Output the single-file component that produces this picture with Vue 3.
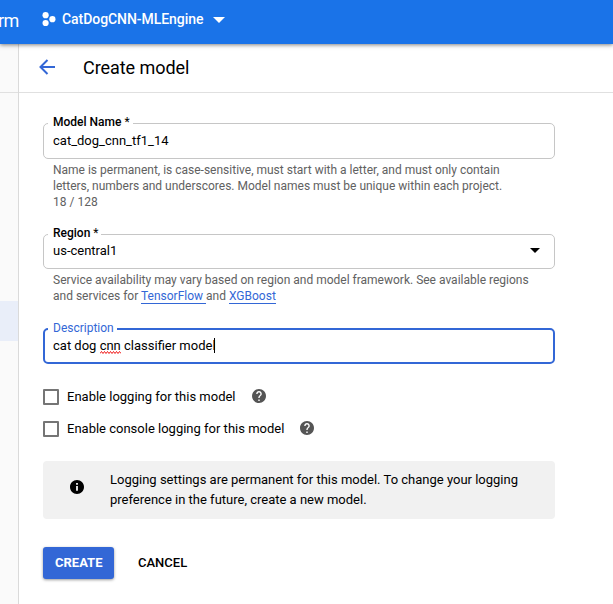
<template>
  <div class="page">
    <header class="topbar">
      <span class="brand">rm</span>
      <svg class="project-icon" width="14" height="15" viewBox="0 0 14 15">
        <circle cx="3.6" cy="3.2" r="3.1" />
        <circle cx="3.6" cy="11" r="3.1" />
        <circle cx="10.4" cy="7.2" r="3.1" />
      </svg>
      <span class="project-name">CatDogCNN-MLEngine</span>
      <svg class="project-arrow" width="12" height="6" viewBox="0 0 12 6"><path d="M0 0h12L6 6z" /></svg>
    </header>
    <div class="body">
      <aside class="sidebar">
        <div class="sidebar-head"></div>
        <div class="sidebar-active"></div>
      </aside>
      <main class="main">
        <div class="title-bar">
          <svg class="back" width="16" height="16" viewBox="0 0 16 16">
            <path d="M16 8H1.500M8.500 1L1.500 8l7 7" />
          </svg>
          <h1>Create model</h1>
        </div>
        <form class="form" @submit.prevent>
          <div class="field name-field">
            <label class="field-label">Model Name <span class="star">*</span></label>
            <div class="field-box">{{ name }}</div>
            <div class="hint">
              Name is permanent, is case-sensitive, must start with a letter, and must only contain<br />
              letters, numbers and underscores. Model names must be unique within each project.<br />
              {{ name.length }} / 128
            </div>
          </div>
          <div class="field region-field">
            <label class="field-label">Region <span class="star">*</span></label>
            <div class="field-box">
              <span>{{ region }}</span>
              <svg width="10" height="5" viewBox="0 0 10 5"><path d="M0 0h10L5 5z" /></svg>
            </div>
            <div class="hint">
              Service availability may vary based on region and model framework. See available regions<br />
              and services for <a>TensorFlow&nbsp;</a>and <a>XGBoost</a>
            </div>
          </div>
          <div class="field focused">
            <label class="field-label">Description</label>
            <div class="field-box">
              <span>cat dog <span class="misspelled">cnn<svg width="21" height="3" viewBox="0 0 21 3"><path d="M0 2.500l1.500-2 1.500 2 1.500-2 1.500 2 1.500-2 1.500 2 1.500-2 1.500 2 1.500-2 1.500 2 1.500-2 1.500 2 1.500-2 1.500 2" /></svg></span> classifier model</span>
              <i class="caret"></i>
            </div>
          </div>
          <div class="checks">
            <div v-for="item in options" :key="item" class="check">
              <span class="checkbox"></span>
              <span class="check-text">{{ item }}</span>
              <svg class="help" width="14" height="14" viewBox="2 2 20 20">
                <path d="M12 2C6.480 2 2 6.480 2 12s4.480 10 10 10 10-4.480 10-10S17.520 2 12 2zm1 17h-2v-2h2v2zm2.070-7.750l-.9.920C13.450 12.900 13 13.500 13 15h-2v-.5c0-1.100.450-2.100 1.170-2.830l1.240-1.260c.370-.360.590-.860.590-1.410 0-1.100-.9-2-2-2s-2 .9-2 2H8c0-2.210 1.790-4 4-4s4 1.790 4 4c0 .880-.360 1.680-.930 2.250z" />
              </svg>
            </div>
          </div>
          <div class="notice">
            <svg width="14" height="14" viewBox="2 2 20 20">
              <path d="M12 2C6.480 2 2 6.480 2 12s4.480 10 10 10 10-4.480 10-10S17.520 2 12 2zm1.300 15.500h-2.600v-7h2.600v7zm0-8.600h-2.600V6.300h2.600v2.600z" />
            </svg>
            <p>
              Logging settings are permanent for this model. To change your logging<br />
              preference in the future, create a new model.
            </p>
          </div>
          <div class="actions">
            <button class="create">CREATE</button>
            <button class="cancel" type="button">CANCEL</button>
          </div>
        </form>
      </main>
    </div>
  </div>
</template>

<script setup>
import { ref } from 'vue'

const name = ref('cat_dog_cnn_tf1_14')
const region = ref('us-central1')
const options = ['Enable logging for this model', 'Enable console logging for this model']
</script>

<style>
body {
  margin: 0;
  overflow: hidden;
}
</style>

<style scoped>
.page {
  height: 604px;
  display: flex;
  flex-direction: column;
  background: #fff;
  color: #000;
  font-family: Roboto, 'Liberation Sans', sans-serif;
  font-size: 13px;
  white-space: nowrap;
}
.topbar {
  position: relative;
  height: 44px;
  box-sizing: border-box;
  padding-bottom: 5px;
  display: flex;
  align-items: center;
  background: #1a73e8;
  color: #fff;
  box-shadow: 0 1px 4px rgba(0, 0, 0, 0.5);
}
.topbar svg {
  fill: #fff;
}
.brand {
  width: 42px;
  margin-top: 2px;
  margin-left: -2px;
  font-size: 18px;
  letter-spacing: -0.6px;
}
.project-icon {
  margin-left: 2px;
}
.project-name {
  margin-left: 6px;
  margin-bottom: 1px;
  width: 151px;
  font-size: 14px;
  font-weight: 500;
  letter-spacing: -0.06px;
}
.body {
  flex: 1;
  display: flex;
}
.sidebar {
  width: 18px;
  background: #fafafa;
  border-right: 1px solid #dadada;
}
.sidebar-head {
  height: 48px;
  border-bottom: 1px solid #e0e0e0;
}
.sidebar-active {
  height: 40px;
  margin-top: 208px;
  background: #e9eef9;
}
.main {
  flex: 1;
}
.title-bar {
  height: 48px;
  padding-left: 20px;
  display: flex;
  align-items: center;
  border-bottom: 1px solid #e0e0e0;
}
.back {
  margin-bottom: 2px;
  fill: none;
  stroke: #3367d6;
  stroke-width: 2;
}
h1 {
  margin: 0 0 2px 28px;
  font-size: 18px;
  font-weight: 400;
  letter-spacing: -0.05px;
}
.form {
  width: 512px;
  padding: 30px 0 0 24px;
}
.field {
  position: relative;
}
.name-field {
  height: 111px;
}
.region-field {
  height: 94px;
}
.field-box {
  height: 36px;
  box-sizing: border-box;
  padding: 0 14px 2px 9px;
  display: flex;
  align-items: center;
  border: 1px solid #c6c6c6;
  border-radius: 5px;
}
.region-field .field-box {
  height: 35px;
  justify-content: space-between;
}
.field-label {
  position: absolute;
  left: 5px;
  top: -9px;
  padding: 0 3px 0 5px;
  background: #fff;
  font-size: 12px;
  line-height: 16px;
  font-weight: 500;
}
.star {
  font-weight: 400;
}
.focused .field-box {
  border: 2px solid #3367d6;
  padding: 0 8px 1px;
}
.focused .field-label {
  top: -8px;
  color: #3367d6;
  font-weight: 400;
}
.misspelled {
  position: relative;
}
.misspelled svg {
  position: absolute;
  left: 0;
  bottom: -1px;
  fill: none;
  stroke: #e00;
  stroke-width: 0.9;
}
.caret {
  width: 1px;
  height: 15px;
  margin-left: -2px;
  background: #000;
}
.hint {
  padding: 3px 0 0 10px;
  color: #616161;
  font-size: 12px;
  line-height: 16px;
}
.hint a {
  color: #3367d6;
  border-bottom: 1px solid #3367d6;
}
.checks {
  padding-top: 17px;
}
.check {
  height: 32px;
  display: flex;
  align-items: center;
}
.checkbox {
  width: 16px;
  height: 16px;
  box-sizing: border-box;
  border: 2px solid #757575;
  border-radius: 1px;
}
.check-text {
  margin: 0 0 2px 8px;
}
.help {
  margin: 0 0 2px 16px;
  fill: #555;
}
.notice {
  height: 58px;
  margin-top: 16px;
  padding-left: 27px;
  display: flex;
  align-items: center;
  box-sizing: border-box;
  background: #f1f1f1;
  border-radius: 4px;
}
.notice svg {
  margin-bottom: 6px;
}
.notice p {
  margin: 0 0 0 26px;
  line-height: 20px;
}
.actions {
  margin-top: 28px;
  display: flex;
}
button {
  height: 32px;
  padding: 0 12px 2px;
  border: 0;
  background: none;
  color: #000;
  font-family: inherit;
  font-size: 13px;
  font-weight: 500;
}
.create {
  width: 71px;
  margin-right: 12px;
  border-radius: 3px;
  background: #3367d6;
  color: #fff;
  font-weight: 700;
  box-shadow: 0 1px 3px rgba(0, 0, 0, 0.4);
}
</style>
